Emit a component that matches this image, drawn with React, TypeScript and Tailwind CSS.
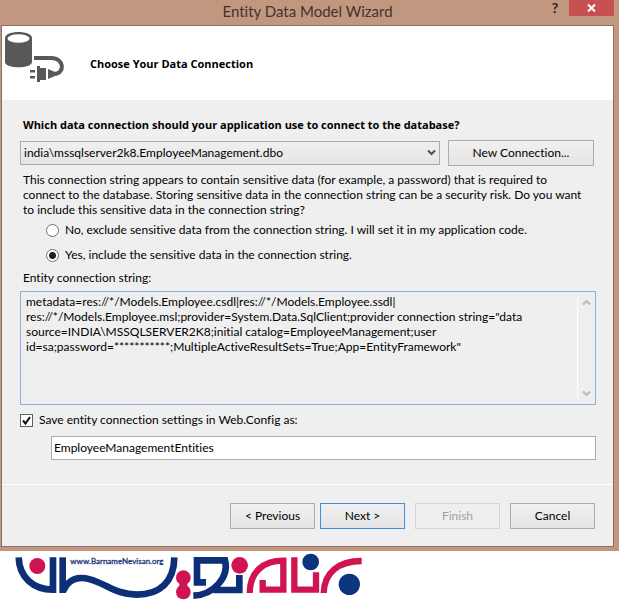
import { useState } from "react";
import type { ReactNode } from "react";

const connectionString = [
  "metadata=res://*/Models.Employee.csdl|res://*/Models.Employee.ssdl|",
  "res://*/Models.Employee.msl;provider=System.Data.SqlClient;provider connection string=\"data",
  "source=INDIA\\MSSQLSERVER2K8;initial catalog=EmployeeManagement;user",
  "id=sa;password=***********;MultipleActiveResultSets=True;App=EntityFramework\"",
].join("\n");

function DatabasePlugIcon() {
  return (
    <svg width="60" height="52" viewBox="0 0 60 52" className="shrink-0" aria-hidden="true">
      <path d="M0 6 C0 -2 27 -2 27 6 V30 C27 37 0 37 0 30 Z" fill="#58585a" />
      <ellipse cx="13.500" cy="6.500" rx="11" ry="4.300" fill="#fff" />
      <path
        d="M29 26 H46 C60 26 60 42 49 42"
        fill="none"
        stroke="#58585a"
        strokeWidth="4"
      />
      <path d="M43 37 L50 40 V44 L43 47 Z" fill="#58585a" />
      <path d="M32 34 H35 V36 H41 V48 H35 V50 H32 Z" fill="#58585a" />
      <path d="M25 38 H30 V40.500 H25 Z M25 44 H30 V46.500 H25 Z" fill="#58585a" />
    </svg>
  );
}

function Chevron({ up = false, className = "" }: { up?: boolean; className?: string }) {
  return (
    <svg width="9" height="7" viewBox="0 0 9 7" className={className} aria-hidden="true">
      <path
        d={up ? "M1 5.500 L4.500 2 L8 5.500" : "M1 1.500 L4.500 5 L8 1.500"}
        fill="none"
        stroke="currentColor"
        strokeWidth="2"
      />
    </svg>
  );
}

function SiteLogo() {
  return (
    <svg
      width="380"
      height="50"
      viewBox="0 33 1140 150"
      role="img"
      aria-label="BarnameNevisan"
    >
      <g fill="none" stroke="#0c2f78" strokeWidth="20">
        <path d="M56 52 C58 112 100 149 159 149 V52" />
        <path d="M188 52 V159" />
        <path d="M190 152 C205 116 235 108 270 118 C320 132 350 164 410 164 C480 164 522 125 523 52" />
        <path d="M618 127 H591 V61 H675 C688 112 640 165 580 167" />
        <path d="M640 150 H718 V105" />
      </g>
      <g fill="none" stroke="#d01452" strokeWidth="19">
        <path d="M749 159 C750 95 790 62 850 62 V149 H788 V120" />
        <path d="M883 52 V149 H948 V97" />
        <path d="M971 159 C973 98 1015 63 1085 63" />
      </g>
      <g fill="#d01452">
        <circle cx="112" cy="78" r="24" />
        <circle cx="550" cy="113" r="22" />
        <circle cx="550" cy="156" r="22" />
        <path d="M538 124 H562 V146 H538 Z" />
        <circle cx="719" cy="76" r="25" />
      </g>
      <g fill="#0c3580">
        <circle cx="932" cy="66" r="25" />
        <circle cx="1048" cy="133" r="32" />
      </g>
      <text x="211" y="72" fontSize="24" fill="#263a7c" stroke="#263a7c">
        www.BarnameNevisan.org
      </text>
    </svg>
  );
}

function DialogButton({
  children,
  primary = false,
  disabled = false,
}: {
  children: ReactNode;
  primary?: boolean;
  disabled?: boolean;
}) {
  const look = disabled
    ? "border-[#d4d4d4] bg-[#efefef] text-[#a0a0a0]"
    : primary
      ? "border-[#3c8fe0] bg-linear-to-b from-[#f0f0f0] to-[#e5e5e5]"
      : "border-[#acacac] bg-linear-to-b from-[#f0f0f0] to-[#e5e5e5]";
  return (
    <button type="button" disabled={disabled} className={`h-[26px] w-[85px] border ${look}`}>
      {children}
    </button>
  );
}

export default function App() {
  const [includeSensitive, setIncludeSensitive] = useState(true);
  const [save, setSave] = useState(true);

  return (
    <div className="bg-white font-['Lato',sans-serif] text-xs text-black [font-variant-ligatures:none]">
      <div className="bg-[#c19780] pr-[5px] pb-1 pl-px">
        <header className="grid h-[25px] grid-cols-[1fr_auto_1fr] items-start">
          <span />
          <h1 className="text-[15px] leading-[22px] text-[#43332b]">Entity Data Model Wizard</h1>
          <div className="flex justify-end gap-2">
            <button type="button" aria-label="Help" className="h-4 w-3 text-sm leading-4 font-bold text-[#2b211c]">
              ?
            </button>
            <button
              type="button"
              aria-label="Close"
              className="grid h-4 w-[45px] place-items-center bg-[#c75050] text-white"
            >
              <svg width="9" height="8" viewBox="0 0 9 8">
                <path d="M1 0.500 L8 7.500 M8 0.500 L1 7.500" stroke="currentColor" strokeWidth="2" />
              </svg>
            </button>
          </div>
        </header>

        <main className="border border-[#8f6f5f] bg-[#efefef]">
          <div className="flex h-[74px] items-start gap-[25px] bg-white pt-[6px] pl-[3px]">
            <DatabasePlugIcon />
            <h2 className="pt-6 font-['Open_Sans',sans-serif] text-[11px] leading-4 font-bold">
              Choose Your Data Connection
            </h2>
          </div>

          <form className="pt-[17px] pr-[17px] pl-[18px]" onSubmit={(e) => e.preventDefault()}>
            <label
              htmlFor="connection"
              className="block pl-[3px] font-['Open_Sans',sans-serif] text-[11px] leading-4 font-bold"
            >
              Which data connection should your application use to connect to the database?
            </label>
            <div className="mt-[7px] flex items-center gap-2 pr-0.5">
              <div className="relative flex-1">
                <select
                  id="connection"
                  className="block h-6 w-full appearance-none border border-[#acacac] bg-linear-to-b from-[#f0f0f0] to-[#e5e5e5] pl-[3px]"
                >
                  <option>india\mssqlserver2k8.EmployeeManagement.dbo</option>
                </select>
                <Chevron className="pointer-events-none absolute top-2 right-1 text-[#505050]" />
              </div>
              <button
                type="button"
                className="h-[26px] w-[146px] border border-[#acacac] bg-linear-to-b from-[#f0f0f0] to-[#e5e5e5]"
              >
                New Connection...
              </button>
            </div>

            <p className="mt-[6px] pl-[3px] leading-[15px]">
              This connection string appears to contain sensitive data (for example, a password) that is required to
              <br />
              connect to the database. Storing sensitive data in the connection string can be a security risk. Do you want
              <br />
              to include this sensitive data in the connection string?
            </p>

            <div className="mt-[5px] flex flex-col gap-[9px] pl-[26px] leading-4">
              <label className="flex items-center gap-[6px]">
                <input
                  type="radio"
                  name="sensitive"
                  checked={!includeSensitive}
                  onChange={() => setIncludeSensitive(false)}
                  className="h-[13px] w-[13px] appearance-none rounded-full border border-[#707070] bg-white checked:bg-[radial-gradient(circle,#202020_3px,white_4px)]"
                />
                No, exclude sensitive data from the connection string. I will set it in my application code.
              </label>
              <label className="flex items-center gap-[6px]">
                <input
                  type="radio"
                  name="sensitive"
                  checked={includeSensitive}
                  onChange={() => setIncludeSensitive(true)}
                  className="h-[13px] w-[13px] appearance-none rounded-full border border-[#707070] bg-white checked:bg-[radial-gradient(circle,#202020_3px,white_4px)]"
                />
                Yes, include the sensitive data in the connection string.
              </label>
            </div>

            <label htmlFor="entity-string" className="mt-[7px] block pl-[3px] leading-4">
              Entity connection string:
            </label>
            <div className="mt-[5px] flex h-[114px] border border-[#8eaed6]">
              <textarea
                id="entity-string"
                readOnly
                wrap="off"
                value={connectionString}
                className="flex-1 resize-none overflow-hidden px-[5px] py-0.5 leading-[15px] outline-none"
              />
              <div className="my-1 flex w-[18px] flex-col items-center justify-between border-l border-white py-[3px] text-[#b8b8b8]">
                <Chevron up />
                <Chevron />
              </div>
            </div>

            <label className="mt-[7px] flex items-center gap-[6px] leading-4">
              <span className="relative flex">
                <input
                  type="checkbox"
                  checked={save}
                  onChange={(e) => setSave(e.target.checked)}
                  className="peer h-[13px] w-[13px] appearance-none border border-[#606060] bg-white"
                />
                <svg
                  width="13"
                  height="13"
                  viewBox="0 0 13 13"
                  className="pointer-events-none invisible absolute inset-0 peer-checked:visible"
                >
                  <path d="M3 6.500 L5.500 9.500 L10 3" fill="none" stroke="#101010" strokeWidth="2" />
                </svg>
              </span>
              Save entity connection settings in Web.Config as:
            </label>
            <input
              type="text"
              aria-label="Entity settings name"
              defaultValue="EmployeeManagementEntities"
              className="mt-2 ml-[31px] block h-6 w-[calc(100%-31px)] border border-[#ababab] bg-white px-0.5 pb-0.5 outline-none"
            />
          </form>

          <footer className="mt-6 flex justify-end border-t border-white pt-[18px] pr-[18px] pb-[17px]">
            <div className="flex gap-[5px]">
              <DialogButton>&lt; Previous</DialogButton>
              <DialogButton primary>Next &gt;</DialogButton>
            </div>
            <div className="ml-[10px] flex gap-[10px]">
              <DialogButton disabled>Finish</DialogButton>
              <DialogButton>Cancel</DialogButton>
            </div>
          </footer>
        </main>
      </div>
      <SiteLogo />
    </div>
  );
}
